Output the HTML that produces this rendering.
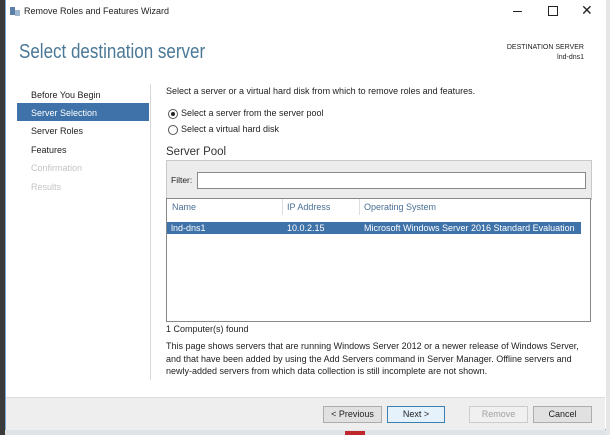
<!DOCTYPE html><html><head><style>
body{margin:0;width:610px;height:435px;overflow:hidden;background:#dfe3e8;font-family:"Liberation Sans",sans-serif;font-size:9px;color:#1e1e1e;position:relative}
.a{position:absolute;white-space:nowrap}
.win{position:absolute;left:5px;top:0;width:600px;height:429px;background:#fff;border:1px solid #7aa7d8;border-top:none}
.btn{position:absolute;top:406px;height:15px;border:1px solid #adadad;background:#e1e1e1;text-align:center;line-height:15px;font-size:9px}
.nav{position:absolute;left:31px;font-size:9px}
</style></head><body>
<div class="win"></div>
<div class="a" style="left:0;top:0;width:5px;height:435px;background:#3a3a3a"></div>
<div class="a" style="left:606px;top:0;width:4px;height:435px;background:#e6e6e6"></div>
<svg class="a" style="left:9px;top:6px" width="12" height="11"><rect x="1" y="1" width="5" height="8" fill="#5b7fa8"/><rect x="6" y="4" width="5" height="6" fill="#9fb6cf"/></svg>
<div class="a" style="left:24px;top:6px;font-size:9px">Remove Roles and Features Wizard</div>
<div class="a" style="left:513px;top:11px;width:9px;height:1px;background:#222"></div>
<div class="a" style="left:548px;top:6px;width:8px;height:8px;border:1px solid #222"></div>
<div class="a" style="left:581px;top:2px;font-size:14px;color:#222">✕</div>
<div class="a" style="left:19px;top:41px;font-size:20px;color:#4a7896;transform:scaleX(0.85);transform-origin:left">Select destination server</div>
<div class="a" style="right:26px;top:43px;font-size:7px;text-align:right;line-height:10px">DESTINATION SERVER<br>lnd-dns1</div>
<div class="nav a" style="top:90px">Before You Begin</div>
<div class="a" style="left:17px;top:103px;width:132px;height:18px;background:#3e72a8"></div>
<div class="nav a" style="top:108px;color:#fff">Server Selection</div>
<div class="nav a" style="top:126px">Server Roles</div>
<div class="nav a" style="top:145px">Features</div>
<div class="nav a" style="top:163px;color:#c4c4c4">Confirmation</div>
<div class="nav a" style="top:182px;color:#c4c4c4">Results</div>
<div class="a" style="left:150px;top:84px;width:1px;height:296px;background:#d8d8d8"></div>
<div class="a" style="left:166px;top:86px">Select a server or a virtual hard disk from which to remove roles and features.</div>
<div class="a" style="left:168px;top:109px;width:8px;height:8px;border:1px solid #555;border-radius:50%"></div>
<div class="a" style="left:171px;top:112px;width:4px;height:4px;background:#222;border-radius:50%"></div>
<div class="a" style="left:181px;top:108px">Select a server from the server pool</div>
<div class="a" style="left:168px;top:125px;width:8px;height:8px;border:1px solid #555;border-radius:50%"></div>
<div class="a" style="left:181px;top:124px">Select a virtual hard disk</div>
<div class="a" style="left:166px;top:146px;font-size:11.5px;color:#333">Server Pool</div>
<div class="a" style="left:166px;top:160px;width:424px;height:38px;background:#ececec;border:1px solid #c8c8c8"></div>
<div class="a" style="left:171px;top:175px;font-size:8.5px">Filter:</div>
<div class="a" style="left:197px;top:172px;width:387px;height:15px;background:#fff;border:1px solid #888"></div>
<div class="a" style="left:166px;top:198px;width:423px;height:122px;background:#fff;border:1px solid #888"></div>
<div class="a" style="left:172px;top:202px;color:#4a6f96">Name</div>
<div class="a" style="left:287px;top:202px;color:#4a6f96">IP Address</div>
<div class="a" style="left:364px;top:202px;color:#4a6f96">Operating System</div>
<div class="a" style="left:282px;top:199px;width:1px;height:16px;background:#ddd"></div>
<div class="a" style="left:359px;top:199px;width:1px;height:16px;background:#ddd"></div>
<div class="a" style="left:167px;top:222px;width:414px;height:12px;background:#3e72a8"></div>
<div class="a" style="left:171px;top:223px;color:#fff">lnd-dns1</div>
<div class="a" style="left:287px;top:223px;color:#fff">10.0.2.15</div>
<div class="a" style="left:364px;top:223px;color:#fff">Microsoft Windows Server 2016 Standard Evaluation</div>
<div class="a" style="left:166px;top:324px">1 Computer(s) found</div>
<div class="a" style="left:166px;top:340px;line-height:12.5px">This page shows servers that are running Windows Server 2012 or a newer release of Windows Server,<br>and that have been added by using the Add Servers command in Server Manager. Offline servers and<br>newly-added servers from which data collection is still incomplete are not shown.</div>
<div class="a" style="left:6px;top:397px;width:599px;height:32px;background:#eeeeee;border-top:1px solid #ddd"></div>
<div class="btn" style="left:323px;width:57px">&lt; Previous</div>
<div class="btn" style="left:387px;width:56px;background:#e5f1fb;border-color:#3c7fb1">Next &gt;</div>
<div class="btn" style="left:469px;width:57px;color:#a0a0a0;background:#f0f0f0;border-color:#ccc">Remove</div>
<div class="btn" style="left:533px;width:57px">Cancel</div>
<div class="a" style="left:345px;top:431px;width:20px;height:4px;background:#c0272d"></div>
</body></html>
